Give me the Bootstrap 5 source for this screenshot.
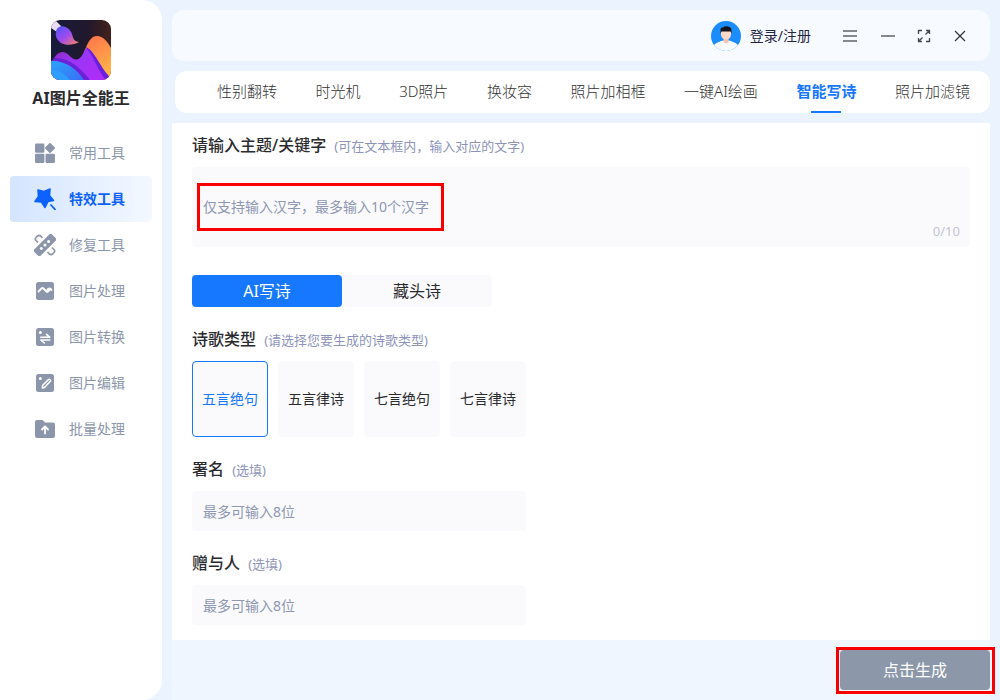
<!DOCTYPE html>
<html lang="zh-CN">
<head>
<meta charset="utf-8">
<meta name="viewport" content="width=device-width, initial-scale=1">
<title>AI图片全能王</title>
<link href="https://cdn.jsdelivr.net/npm/bootstrap@5.3.0/dist/css/bootstrap.min.css" rel="stylesheet">
<style>
  :root { --brand: #1677ff; --field: #fafafd; --muted: #8e97b3; --ink: #2b2b2f; --mark-red: #f80000; }
  body { background: #eaf3fe; color: var(--ink); font-family: "Noto Sans", "Noto Sans CJK SC", sans-serif; font-size: 14px; line-height: 22px; }
  .sidebar { width: 162px; background: #fff; border-radius: 0 20px 20px 0; padding: 20px 10px; }
  .app-name { font-size: 16px; line-height: 24px; font-weight: 700; margin: 6px 0 20px; }
  .side-link { height: 46px; padding: 0 24px; gap: 13px; color: #8c96aa; border-radius: 4px; }
  .side-link svg { width: 22px; height: 22px; flex: none; }
  .side-link.active { color: #0d62fe; font-weight: 700; background: linear-gradient(90deg, #d3e5ff, #f4f8ff); }
  .main-col { padding: 10px 10px 0; min-width: 0; }
  .topbar { height: 51px; border-radius: 12px; background: #f7fbff; padding-right: 12px; }
  .win-btn { width: 36px; height: 36px; padding: 0; border: 0; background: none; display: grid; place-items: center; }
  .menu-btn { width: 40px; }
  .login { color: #25253f; text-decoration: none; gap: 9px; margin-right: 19px; }
  .tabs { height: 42px; margin: 10px 0 10px 3px; border-radius: 12px; background: #fff; padding: 0 20px 0 42px; font-size: 15px; }
  .tabs a { color: #333; text-decoration: none; font-weight: 300; line-height: 40px; height: 42px; white-space: nowrap; position: relative; }
  .tabs a.active { color: var(--brand); font-weight: 700; }
  .tabs a.active::after { content: ""; position: absolute; bottom: 0; left: 25%; right: 25%; height: 2px; background: var(--brand); }
  .panel { background: #fff; padding: 11px 20px 15px; }
  .field-title { display: block; height: 24px; font-size: 16px; line-height: 22px; font-weight: 500; margin-bottom: 9px; }
  .field-title small { font-size: 13px; line-height: 20px; font-weight: 400; color: #8e93bb; margin-left: 4px; }
  .field, .field:focus { background: var(--field); border: 0; border-radius: 4px; color: var(--ink); font-size: 14px; padding: 0 11px; }
  .field::placeholder { color: var(--muted); opacity: 1; }
  textarea.field, textarea.field:focus { height: 80px; padding-top: 29px; line-height: 22px; resize: none; }
  input.field { height: 40px; }
  .short { width: 334px; max-width: 100%; }
  .counter { position: absolute; right: 10px; bottom: 6px; font-size: 13px; line-height: 20px; color: #c3c5d6; }
  .callout { position: absolute; border: 3px solid var(--mark-red); pointer-events: none; }
  .callout-text { left: 5px; top: 16px; width: 247px; height: 48px; }
  .callout-btn { inset: -3px -5px -4px -4px; }
  .modes { margin: 28px 0 21px; }
  .modes label { width: 150px; height: 32px; line-height: 32px; padding: 0; border: 0; border-radius: 4px; font-size: 16px; background: var(--field); color: var(--ink); }
  .btn-check:checked + .mode-btn { background: var(--brand); color: #fff; }
  .kinds { gap: 10px; margin-bottom: 21px; }
  .kinds label { width: 76px; height: 76px; line-height: 74px; padding: 0; border: 1px solid var(--field); border-radius: 4px; font-size: 14px; background: var(--field); color: var(--ink); }
  .btn-check:checked + .kind-btn { border-color: var(--brand); background: var(--field); color: var(--brand); }
  .names { display: grid; gap: 21px; }
  .action-bar { background: #f0f6ff; height: 60px; }
  .go { width: 150px; height: 40px; padding: 0; border: 0; border-radius: 4px; background: #8c97aa; color: #fff; font-size: 16px; }
  .go:hover { background: #7d889c; color: #fff; }
</style>
</head>
<body>
<div class="d-flex min-vh-100">
  <aside class="sidebar flex-shrink-0">
    <div class="text-center">
      <svg class="d-block mx-auto" width="60" height="60" viewBox="0 0 60 60" aria-hidden="true">
        <defs>
          <clipPath id="tile"><rect width="60" height="60" rx="9"/></clipPath>
          <linearGradient id="night" x1="0" y1="0" x2="1" y2="0"><stop offset="0" stop-color="#171b3d"/><stop offset=".6" stop-color="#20182c"/><stop offset="1" stop-color="#43211b"/></linearGradient>
          <linearGradient id="sun" x1="0" y1="0" x2="0.4" y2="1"><stop offset="0" stop-color="#ff6f4d"/><stop offset="1" stop-color="#ffb347"/></linearGradient>
          <linearGradient id="violet" x1="0" y1="0" x2="1" y2="1"><stop offset="0" stop-color="#8a2bb8"/><stop offset=".4" stop-color="#9a35f5"/><stop offset="1" stop-color="#b22cf7"/></linearGradient>
          <linearGradient id="sea" x1="0" y1="0" x2="1" y2="1"><stop offset="0" stop-color="#2ba4fa"/><stop offset="1" stop-color="#3a6df5"/></linearGradient>
          <linearGradient id="bristle" x1="0" y1="0" x2="1" y2="1"><stop offset="0" stop-color="#4a55f7"/><stop offset=".5" stop-color="#a04af0"/><stop offset="1" stop-color="#ff8a50"/></linearGradient>
        </defs>
        <g clip-path="url(#tile)">
          <rect width="60" height="60" fill="url(#night)"/>
          <path d="M33 32C37 22 40 16 46 16c6 0 10 5 14 12v32H50z" fill="url(#sun)"/>
          <path d="M35 27c9 4 15 22 25 31v2H44z" fill="#6a1fdf"/>
          <path d="M0 44C4 35 8 31.500 12 32c6 .5 8 8 14 7.500 4-.5 6-6 9-11.500 8 8 12 24 20 32H0z" fill="url(#violet)"/>
          <path d="M3 38c14-1 26 9 36 22H0V42z" fill="#6a22d8"/>
          <path d="M0 41c13-1 25 7 33 19H0z" fill="url(#sea)"/>
          <path d="M0 50c8 0 14 4 19 10H0z" fill="#2f9dfb"/>
          <path d="M0 2l5-1 5 5-4 6-6-4z" fill="#eadcf5"/>
          <path d="M5 12c0-4 4-6.500 8-5.500 6 2 8 6 9 11 1 3 3 4 6 4.500-5 3-13 4-18 1C6 20 4 16 5 12z" fill="url(#bristle)"/>
        </g>
      </svg>
      <h1 class="app-name">AI图片全能王</h1>
    </div>
    <nav class="d-flex flex-column">
      <a href="#" class="side-link d-flex align-items-center text-decoration-none">
        <svg viewBox="0 0 22 22" fill="currentColor"><rect x="1" y="1.500" width="9.400" height="9.200" rx="1.300"/><rect x="1" y="11.800" width="9.400" height="9.200" rx="1.300"/><rect x="11.500" y="11.800" width="9.400" height="9.200" rx="1.300"/><path d="M15.300 1.300q.7-.6 1.400 0l4 4q.6.700 0 1.400l-4 4q-.7.600-1.400 0l-4-4q-.6-.7 0-1.400z"/></svg>常用工具</a>
      <a href="#" class="side-link active d-flex align-items-center text-decoration-none" aria-current="page">
        <svg viewBox="0 0 22 22" fill="currentColor" stroke="currentColor" stroke-linejoin="round"><path d="M4 2l6 1.500L16 1l-.5 6.500 4 5-5.500 1L11 19.500 7.500 14 1 13.500 4.500 8.500z" stroke-width="1.600"/><path d="M17 17l4 4.300" stroke-width="1.800" stroke-linecap="round"/></svg>特效工具</a>
      <a href="#" class="side-link d-flex align-items-center text-decoration-none">
        <svg viewBox="0 0 22 22" fill="none"><rect x="-1.500" y="6.500" width="25" height="9" rx="2" transform="rotate(-45 11 11)" fill="currentColor"/><g fill="#fff"><circle cx="7.300" cy="14.400" r="1.500"/><circle cx="11" cy="11" r="1.500"/><circle cx="14.600" cy="7.400" r="1.500"/></g><path d="M3.500 8L2 6.500q-1.400-1.500 0-3L3.500 2q1.500-1.200 3 0L8 3.500M18.500 14l1.500 1.500q1.400 1.500 0 3L18.500 20q-1.500 1.200-3 0L14 18.500" stroke="currentColor" stroke-width="1.700" stroke-linecap="round"/></svg>修复工具</a>
      <a href="#" class="side-link d-flex align-items-center text-decoration-none">
        <svg viewBox="0 0 22 22"><rect x="2" y="2" width="18" height="18" rx="2.500" fill="currentColor"/><path d="M4.500 11.500l3.200-3.200q.8-.6 1.500 0l3.300 3.200q.8.600 1.500 0l2-2q-1.200-1.500-2.500 0M15 8.500q1.800 0 2.500 1.500" stroke="#fff" stroke-width="1.900" fill="none" stroke-linecap="round"/></svg>图片处理</a>
      <a href="#" class="side-link d-flex align-items-center text-decoration-none">
        <svg viewBox="0 0 22 22"><rect x="2" y="2" width="18" height="18" rx="2.500" fill="currentColor"/><circle cx="6.300" cy="6.500" r="1.500" fill="#fff"/><path d="M6.800 11.300h9L12.500 8.300M15.800 14h-9l3.500 3" stroke="#fff" stroke-width="1.600" fill="none" stroke-linecap="round" stroke-linejoin="round"/></svg>图片转换</a>
      <a href="#" class="side-link d-flex align-items-center text-decoration-none">
        <svg viewBox="0 0 22 22"><rect x="2" y="2" width="18" height="18" rx="2.500" fill="currentColor"/><circle cx="6.300" cy="6.500" r="1.500" fill="#fff"/><path d="M8.500 16v-2.500L14.500 7.500q.8-.6 1.600.2t.2 1.600L10.500 15.500z" stroke="#fff" stroke-width="1.600" fill="none" stroke-linejoin="round"/></svg>图片编辑</a>
      <a href="#" class="side-link d-flex align-items-center text-decoration-none">
        <svg viewBox="0 0 22 22"><path d="M1 4q0-2 2-2h5.500l2.500 2.500h8q2 0 2 2V18q0 2-2 2H3q-2 0-2-2z" fill="currentColor"/><path d="M11 15.500V9M8 11.500L11 8.500l3 3" stroke="#fff" stroke-width="1.800" fill="none" stroke-linecap="round" stroke-linejoin="round"/></svg>批量处理</a>
    </nav>
  </aside>

  <div class="main-col flex-grow-1 d-flex flex-column">
    <header class="topbar d-flex align-items-center justify-content-end">
      <a href="#" class="login d-flex align-items-center">
        <svg width="30" height="30" viewBox="0 0 30 30" aria-hidden="true">
          <defs><clipPath id="face"><circle cx="15" cy="15" r="15"/></clipPath></defs>
          <g clip-path="url(#face)"><rect width="30" height="30" fill="#1b8cfb"/>
          <path d="M1 30c0-6 4-8.500 11-10.500h6C25 21.500 29 24 29 30z" fill="#f7fafd"/>
          <path d="M12.500 16h5v5q-2.500 2.500-5 0z" fill="#f3c3ad"/>
          <path d="M10 9h10v4.500c0 3-2.500 5-5 5s-5-2-5-5z" fill="#fdd9c8"/>
          <path d="M9.500 12.500V8.500Q9.500 6 12 6.500q1-1.500 4-1.300Q20.500 5.500 20.500 9.500v3l-1-2H10.500z" fill="#15141a"/></g>
        </svg>登录/注册</a>
      <button type="button" class="win-btn menu-btn" aria-label="菜单"><svg width="16" height="14" viewBox="0 0 16 14" stroke="#85888e" stroke-width="2"><path d="M1 2h14M1 7h14M1 12h14"/></svg></button>
      <button type="button" class="win-btn" aria-label="最小化"><svg width="16" height="14" viewBox="0 0 16 14" stroke="#85888e" stroke-width="2"><path d="M1 7h14"/></svg></button>
      <button type="button" class="win-btn" aria-label="全屏"><svg width="14" height="14" viewBox="0 0 14 14" fill="none" stroke="#44474d" stroke-width="1.300"><path d="M1.500 5V1.500H5M9 1.500h3.500V5M12.500 1.500L8.500 5.500M12.500 9v3.500H9M5 12.500H1.500V9M1.500 12.500l4-4"/></svg></button>
      <button type="button" class="win-btn" aria-label="关闭"><svg width="12" height="12" viewBox="0 0 12 12" stroke="#33363b" stroke-width="1.300"><path d="M1 1l10 10M11 1L1 11"/></svg></button>
    </header>

    <nav class="tabs d-flex justify-content-between">
      <a href="#">性别翻转</a><a href="#">时光机</a><a href="#">3D照片</a><a href="#">换妆容</a><a href="#">照片加相框</a><a href="#">一键AI绘画</a><a href="#" class="active" aria-current="page">智能写诗</a><a href="#">照片加滤镜</a>
    </nav>

    <main class="panel flex-grow-1">
      <label class="field-title" for="topic">请输入主题/关键字 <small>(可在文本框内，输入对应的文字)</small></label>
      <div class="position-relative">
        <textarea id="topic" class="field form-control" placeholder="仅支持输入汉字，最多输入10个汉字" maxlength="10"></textarea>
        <span class="counter">0/10</span>
        <span class="callout callout-text"></span>
      </div>
      <div class="modes d-flex" role="group" aria-label="写诗方式">
        <input type="radio" class="btn-check" name="mode" id="mode-ai" checked><label class="btn mode-btn" for="mode-ai">AI写诗</label>
        <input type="radio" class="btn-check" name="mode" id="mode-head"><label class="btn mode-btn" for="mode-head">藏头诗</label>
      </div>
      <div class="field-title" id="kind-title">诗歌类型 <small>(请选择您要生成的诗歌类型)</small></div>
      <div class="kinds d-flex flex-wrap" role="group" aria-labelledby="kind-title">
        <input type="radio" class="btn-check" name="kind" id="k1" checked><label class="btn kind-btn" for="k1">五言绝句</label>
        <input type="radio" class="btn-check" name="kind" id="k2"><label class="btn kind-btn" for="k2">五言律诗</label>
        <input type="radio" class="btn-check" name="kind" id="k3"><label class="btn kind-btn" for="k3">七言绝句</label>
        <input type="radio" class="btn-check" name="kind" id="k4"><label class="btn kind-btn" for="k4">七言律诗</label>
      </div>
      <div class="names">
        <div>
          <label class="field-title" for="sign">署名 <small>(选填)</small></label>
          <input type="text" id="sign" class="field form-control short" placeholder="最多可输入8位" maxlength="8">
        </div>
        <div>
          <label class="field-title" for="gift">赠与人 <small>(选填)</small></label>
          <input type="text" id="gift" class="field form-control short" placeholder="最多可输入8位" maxlength="8">
        </div>
      </div>
    </main>

    <footer class="action-bar d-flex justify-content-end align-items-center">
      <div class="position-relative">
        <button type="button" class="btn go d-block">点击生成</button>
        <span class="callout callout-btn"></span>
      </div>
    </footer>
  </div>
</div>
<script src="https://cdn.jsdelivr.net/npm/bootstrap@5.3.0/dist/js/bootstrap.bundle.min.js"></script>
</body>
</html>
